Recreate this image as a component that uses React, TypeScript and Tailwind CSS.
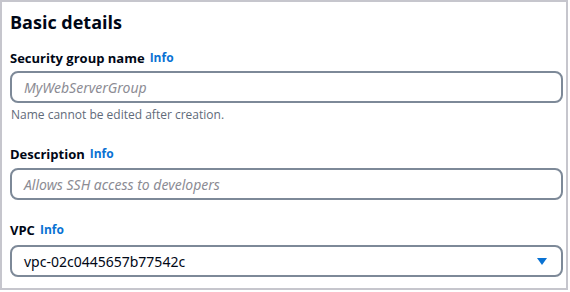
import type { ReactNode } from 'react'

// Amazon Ember isn't installed: Open Sans for headings, labels and helper text,
// Noto Sans for the input values (its widths sit closer to the original).
const sans = { fontFamily: '"Open Sans", "Noto Sans", sans-serif' }
const body = { fontFamily: '"Noto Sans", "Open Sans", sans-serif' }

function Label({ children }: { children: ReactNode }) {
  return (
    <div className="flex h-[18px] items-center gap-[5px] leading-[18px] font-bold">
      <span className="text-[13px] text-[#000716]">{children}</span>
      <span className="text-[12px] text-[#0972d3]">Info</span>
    </div>
  )
}

function Field({ placeholder, className }: { placeholder: string; className: string }) {
  return (
    <div
      className={`flex h-[32px] items-center rounded-[8px] border-2 border-[#7d8998] pr-[12px] pl-[12px] text-[14px] italic text-[#8c8c94] ${className}`}
      style={body}
    >
      {placeholder}
    </div>
  )
}

export default function App() {
  return (
    <div className="h-[292px] w-[570px] bg-white" style={sans}>
      <div className="h-[290px] w-[568px] border-2 border-[#c6c6cd] pt-[8px] pr-[3px] pl-[8px]">
        <h2 className="h-[24px] text-[18px] leading-[24px] font-bold text-[#000716]">Basic details</h2>

        <div className="mt-[15px]">
          <Label>Security group name</Label>
          <Field className="mt-[4px]" placeholder="MyWebServerGroup" />
          <p className="mt-[4px] h-[16px] pl-[1px] text-[12px] leading-[16px] text-[#5f6b7a]">
            Name cannot be edited after creation.
          </p>
        </div>

        <div className="mt-[22px]">
          <Label>Description</Label>
          <Field className="mt-[5px]" placeholder="Allows SSH access to developers" />
        </div>

        <div className="mt-[21px]">
          <Label>VPC</Label>
          <div
            className="mt-[6px] flex h-[32px] items-center justify-between rounded-[8px] border-2 border-[#7d8998] pr-[14px] pl-[12px] text-[14px] text-[#000716]"
            style={body}
          >
            <span>vpc-02c0445657b77542c</span>
            <svg width="10" height="7" viewBox="0 0 10 7" className="text-[#0972d3]">
              <path d="M0 0h10L5 7z" fill="currentColor" />
            </svg>
          </div>
        </div>
      </div>
    </div>
  )
}
